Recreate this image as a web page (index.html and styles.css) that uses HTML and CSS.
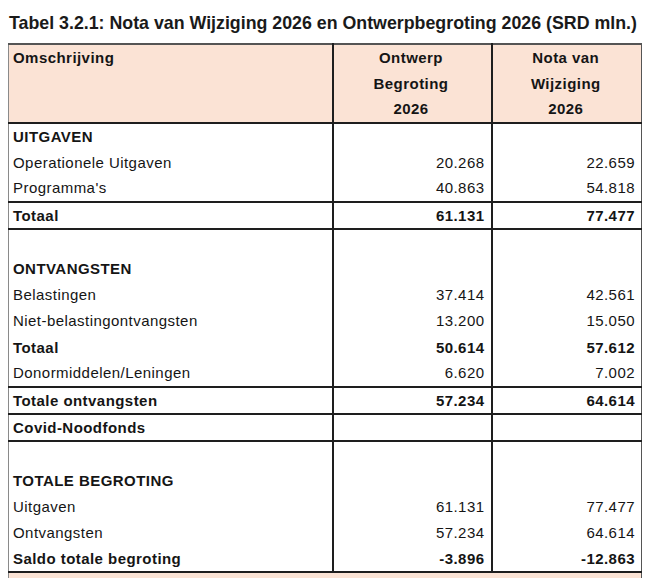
FILE: index.html
```html
<!DOCTYPE html>
<html lang="nl">
<head>
<meta charset="utf-8">
<title>Tabel 3.2.1</title>
<link rel="stylesheet" href="styles.css">
</head>
<body>
<div class="page">
  <h1 class="title">Tabel 3.2.1: Nota van Wijziging 2026 en Ontwerpbegroting 2026 (SRD mln.)</h1>
  <table class="budget">
    <colgroup>
      <col class="c-desc">
      <col class="c-ontw">
      <col class="c-nota">
    </colgroup>
    <thead>
      <tr>
        <th class="desc">Omschrijving</th>
        <th class="head">Ontwerp<br>Begroting<br>2026</th>
        <th class="head">Nota van<br>Wijziging<br>2026</th>
      </tr>
    </thead>
    <tbody class="group">
      <tr class="bold"><td>UITGAVEN</td><td></td><td></td></tr>
      <tr><td>Operationele Uitgaven</td><td class="num">20.268</td><td class="num">22.659</td></tr>
      <tr><td>Programma's</td><td class="num">40.863</td><td class="num">54.818</td></tr>
    </tbody>
    <tbody class="group">
      <tr class="bold"><td>Totaal</td><td class="num">61.131</td><td class="num">77.477</td></tr>
    </tbody>
    <tbody class="group">
      <tr><td></td><td></td><td></td></tr>
      <tr class="bold"><td>ONTVANGSTEN</td><td></td><td></td></tr>
      <tr><td>Belastingen</td><td class="num">37.414</td><td class="num">42.561</td></tr>
      <tr><td>Niet-belastingontvangsten</td><td class="num">13.200</td><td class="num">15.050</td></tr>
      <tr class="bold"><td>Totaal</td><td class="num">50.614</td><td class="num">57.612</td></tr>
      <tr><td>Donormiddelen/Leningen</td><td class="num">6.620</td><td class="num">7.002</td></tr>
    </tbody>
    <tbody class="group">
      <tr class="bold"><td>Totale ontvangsten</td><td class="num">57.234</td><td class="num">64.614</td></tr>
    </tbody>
    <tbody class="group">
      <tr class="bold"><td>Covid-Noodfonds</td><td></td><td></td></tr>
    </tbody>
    <tbody class="group">
      <tr><td></td><td></td><td></td></tr>
      <tr class="bold"><td>TOTALE BEGROTING</td><td></td><td></td></tr>
      <tr><td>Uitgaven</td><td class="num">61.131</td><td class="num">77.477</td></tr>
      <tr><td>Ontvangsten</td><td class="num">57.234</td><td class="num">64.614</td></tr>
      <tr class="bold"><td>Saldo totale begroting</td><td class="num">-3.896</td><td class="num">-12.863</td></tr>
    </tbody>
    <tbody class="group next">
      <tr><td colspan="3"></td></tr>
    </tbody>
  </table>
</div>
</body>
</html>
```

FILE: styles.css
```css
html, body {
  margin: 0;
  padding: 0;
  background: #ffffff;
}

body {
  font-family: "Liberation Sans", Arial, sans-serif;
  color: #151515;
  overflow: hidden;
  height: 578px;
}

.page {
  padding: 13px 0 0 8px;
}

.title {
  margin: 0 0 10px 1px;
  font-size: 17.8px;
  font-weight: bold;
  line-height: 20px;
  letter-spacing: 0;
  color: #1a1a1a;
}

.budget {
  border-collapse: collapse;
  width: 633px;
  table-layout: fixed;
  font-size: 15px;
  letter-spacing: 0.45px;
  border-top: 2px solid #555;
  border-left: 1px solid #8a8a8a;
  border-right: 1px solid #555;
}

.c-desc { width: 324px; }
.c-ontw { width: 159px; }
.c-nota { width: 150px; }

.budget th,
.budget td {
  box-sizing: border-box;
  padding: 1px 6px 0 4px;
  height: 26.35px;
  line-height: 24px;
  vertical-align: middle;
  white-space: nowrap;
}

.budget td + td,
.budget th + th {
  border-left: 2px solid #1e1e1e;
}

.budget thead th {
  background: #fbe3d5;
  font-weight: bold;
  vertical-align: top;
  line-height: 25.5px;
  padding-top: 0;
  padding-bottom: 0;
  height: 76px;
  border-bottom: 2px solid #1e1e1e;
}

.budget th.desc {
  text-align: left;
}

.budget th.head {
  text-align: center;
}

.budget .group {
  border-bottom: 2px solid #1e1e1e;
}

.budget .bold td {
  font-weight: bold;
}

.budget td.num {
  text-align: right;
}

.budget .next td {
  background: #fbe3d5;
  height: 20px;
}
```
